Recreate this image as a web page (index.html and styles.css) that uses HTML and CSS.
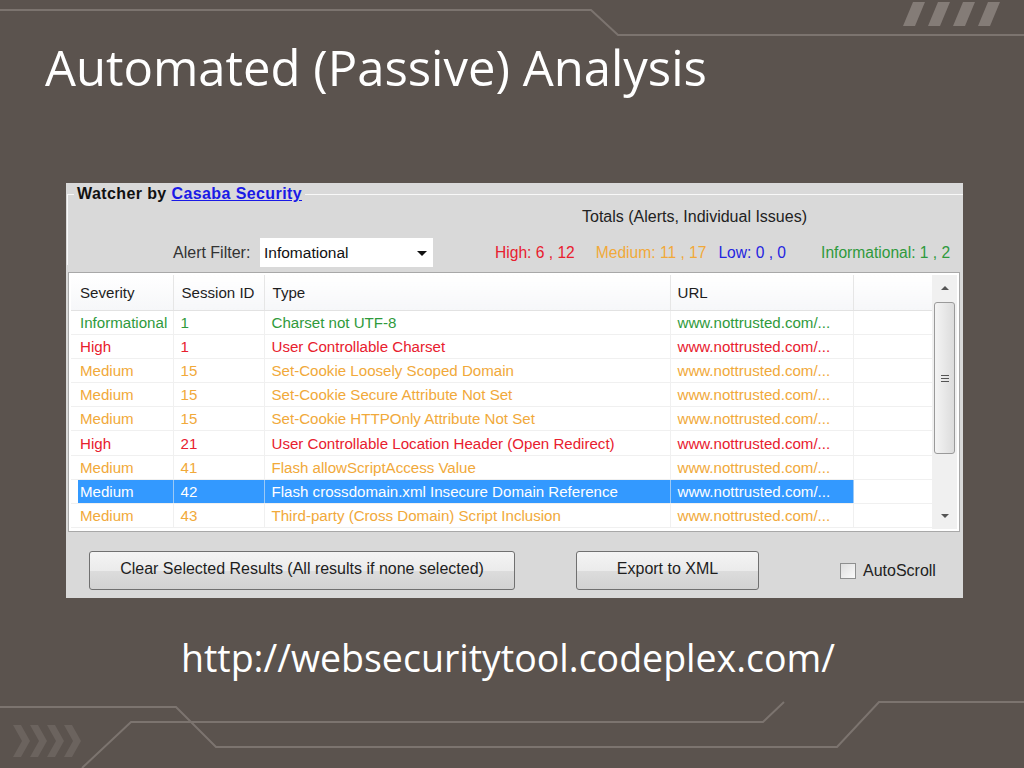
FILE: index.html
```html
<!DOCTYPE html>
<html lang="en">
<head>
	<meta charset="UTF-8">
	<title>Automated (Passive) Analysis</title>
	<link rel="stylesheet" href="styles.css">
</head>
<body>
<div class="slide">
	<!-- slide decoration -->
	<svg class="deco" width="1024" height="768" viewBox="0 0 1024 768">
		<polyline points="0,10 591,10 618,35 1024,35" class="ln"/>
		<polygon points="903,26 913,2 925,2 915,26" class="st"/>
		<polygon points="928,26 938,2 950,2 940,26" class="st"/>
		<polygon points="953,26 963,2 975,2 965,26" class="st"/>
		<polygon points="978,26 988,2 1000,2 990,26" class="st"/>
		<polyline points="0,707 176,707 216,747 837,747 879,702 1024,702" class="ln"/>
		<polyline points="82,768 131,722 763,722 784,702" class="ln"/>
		<polygon points="13,725 21,725 30,741 21,757 13,757 22,741" class="cv"/>
		<polygon points="30,725 38,725 47,741 38,757 30,757 39,741" class="cv"/>
		<polygon points="47,725 55,725 64,741 55,757 47,757 56,741" class="cv"/>
		<polygon points="64,725 72,725 81,741 72,757 64,757 73,741" class="cv"/>
	</svg>

	<h1 class="title">Automated (Passive) Analysis</h1>

	<div class="watcher">
		<fieldset class="grp">
			<legend>Watcher by <a href="#">Casaba Security</a></legend>
			<div class="caption">Totals (Alerts, Individual Issues)</div>
			<div class="filter">
				<span class="lbl">Alert Filter:</span>
				<div class="combo">Infomational<span class="arr"></span></div>
				<span class="tot high">High: 6 , 12</span>
				<span class="tot med">Medium: 11 , 17</span>
				<span class="tot low">Low: 0 , 0</span>
				<span class="tot info">Informational: 1 , 2</span>
			</div>
		</fieldset>

		<div class="list">
			<table class="alerts">
				<tr class="hd"><th class="c1">Severity</th><th class="c2">Session ID</th><th class="c3">Type</th><th class="c4">URL</th><th class="c5"></th></tr>
				<tr class="info"><td>Informational</td><td>1</td><td>Charset not UTF-8</td><td>www.nottrusted.com/...</td><td></td></tr>
				<tr class="high"><td>High</td><td>1</td><td>User Controllable Charset</td><td>www.nottrusted.com/...</td><td></td></tr>
				<tr class="med"><td>Medium</td><td>15</td><td>Set-Cookie Loosely Scoped Domain</td><td>www.nottrusted.com/...</td><td></td></tr>
				<tr class="med"><td>Medium</td><td>15</td><td>Set-Cookie Secure Attribute Not Set</td><td>www.nottrusted.com/...</td><td></td></tr>
				<tr class="med"><td>Medium</td><td>15</td><td>Set-Cookie HTTPOnly Attribute Not Set</td><td>www.nottrusted.com/...</td><td></td></tr>
				<tr class="high"><td>High</td><td>21</td><td>User Controllable Location Header (Open Redirect)</td><td>www.nottrusted.com/...</td><td></td></tr>
				<tr class="med"><td>Medium</td><td>41</td><td>Flash allowScriptAccess Value</td><td>www.nottrusted.com/...</td><td></td></tr>
				<tr class="sel"><td>Medium</td><td>42</td><td>Flash crossdomain.xml Insecure Domain Reference</td><td>www.nottrusted.com/...</td><td class="nosel"></td></tr>
				<tr class="med"><td>Medium</td><td>43</td><td>Third-party (Cross Domain) Script Inclusion</td><td>www.nottrusted.com/...</td><td></td></tr>
			</table>
			<div class="vscroll">
				<div class="sbtn up"></div>
				<div class="thumb"><span></span><span></span><span></span></div>
				<div class="track"></div>
				<div class="sbtn dn"></div>
			</div>
		</div>

		<div class="btns">
			<button class="bt bt-clear">Clear Selected Results (All results if none selected)</button>
			<button class="bt bt-xml">Export to XML</button>
			<label class="chk"><span class="box"></span>AutoScroll</label>
		</div>
	</div>

	<div class="url">http://websecuritytool.codeplex.com/</div>
</div>
</body>
</html>
```

FILE: styles.css
```css
*{box-sizing:border-box;margin:0;padding:0;}
body{background-color:#5b534e;}
.slide{position:relative;width:1024px;height:768px;overflow:hidden;background-color:#5b534e;}
.deco{position:absolute;left:0;top:0;pointer-events:none;}
.deco .ln{fill:none;stroke:#7c746f;stroke-width:2;}
.deco .st{fill:#847c77;}
.deco .cv{fill:#6b635e;}

.title{position:relative;padding:37px 0 0 45px;height:183px;font-family:"Open Sans",sans-serif;font-weight:400;font-size:49px;line-height:60px;color:#fff;}

/* watcher window */
.watcher{position:relative;margin-left:66px;width:897px;height:415px;padding-top:3px;background-color:#d9d9d9;font-family:"Liberation Sans",Arial,sans-serif;font-size:16px;color:#1e1e1e;}
.grp{border:none;border-top:1px solid #f8f8f8;border-left:1px solid #f8f8f8;margin:0 0 0 1px;padding:0;height:79px;}
.grp legend{margin-left:6px;padding:0 3px;font-weight:bold;font-size:16px;color:#111;line-height:16px;letter-spacing:0.4px;}
.grp legend a{color:#1a1ae6;}
.caption{padding:7px 0 0 514px;height:36px;line-height:16px;color:#222;}
.filter{display:flex;align-items:center;height:29px;}
.lbl{margin-left:105px;width:87px;color:#333;}
.combo{position:relative;width:173px;height:29px;background-color:#fff;padding:6px 0 0 4px;color:#111;font-size:15.5px;}
.arr{position:absolute;right:6px;top:13px;border-left:5px solid transparent;border-right:5px solid transparent;border-top:5px solid #111;}
.tot{white-space:nowrap;font-size:15.6px;}
.tot.high{margin-left:62px;color:#e8202e;}
.tot.med{margin-left:21px;color:#f1a93a;}
.tot.low{margin-left:12px;color:#2424e0;}
.tot.info{margin-left:35px;color:#2f9a3c;}

/* list view */
.list{display:flex;margin:7px 0 0 2px;width:892px;height:260px;border:1px solid #a8a8a8;background-color:#fff;padding:2px;font-size:15.1px;}
.alerts{border-collapse:collapse;width:862px;table-layout:fixed;align-self:flex-start;}
.alerts th{height:35px;text-align:left;font-weight:normal;color:#1e1e1e;padding:0 0 0 8px;background:linear-gradient(#fff,#f6f7f9);border-right:1px solid #e6e6e6;border-bottom:1px solid #e2e2e2;}
.alerts .c1{width:102px;padding-left:9px;}
.alerts .c2{width:91px;}
.alerts .c3{width:406px;}
.alerts .c4{width:183px;padding-left:7px;}
.alerts .c5{border-right:none;}
.alerts td{height:24.2px;padding:0 0 0 7px;white-space:nowrap;overflow:hidden;border-right:1px solid #f0f0f0;border-bottom:1px solid #f0f0f0;}
.alerts td:first-child{padding-left:9px;}
.alerts td:nth-child(4){padding-left:7px;}
.alerts td:last-child{border-right:none;}
.alerts tr.info td{color:#2f9a3c;}
.alerts tr.high td{color:#e8202e;}
.alerts tr.med td{color:#f1a93a;}
.alerts tr.sel td{background-color:#3399ff;color:#fff;border-right-color:#9cc9f5;}
.alerts tr.sel td:first-child{box-shadow:inset 7px 0 0 #fff;}
.alerts tr.sel td.nosel{background-color:#fff;}

.vscroll{display:flex;flex-direction:column;width:25px;margin-left:auto;background-color:#f0f0f0;}
.sbtn{position:relative;height:27px;}
.sbtn::after{content:"";position:absolute;left:9px;border-left:4px solid transparent;border-right:4px solid transparent;}
.sbtn.up::after{top:11px;border-bottom:4px solid #555;}
.sbtn.dn::after{top:12px;border-top:4px solid #555;}
.thumb{display:flex;flex-direction:column;justify-content:center;align-items:center;gap:2px;height:152px;margin:0 2px;border:1px solid #9a9a9a;border-radius:3px;background:linear-gradient(90deg,#f4f4f4,#dcdcdc);}
.thumb span{width:8px;height:1px;background-color:#555;}
.track{flex:1;}

/* buttons row */
.btns{display:flex;align-items:center;margin-top:19px;height:39px;}
.bt{height:39px;border:1px solid #707070;border-radius:3px;background:linear-gradient(#f4f4f4 0%,#ebebeb 50%,#dcdcdc 51%,#d2d2d2 100%);font-family:"Liberation Sans",Arial,sans-serif;font-size:16px;color:#1e1e1e;padding-bottom:3px;}
.bt-clear{margin-left:23px;width:426px;}
.bt-xml{margin-left:61px;width:183px;}
.chk{display:flex;align-items:center;margin-left:81px;color:#222;}
.box{width:16px;height:16px;margin-right:7px;border:1px solid #8e8f8f;background:linear-gradient(135deg,#dedede,#fafafa);}

.url{position:relative;margin-top:35px;text-align:center;padding-right:8px;font-family:"Open Sans",sans-serif;font-size:37.5px;line-height:50px;color:#fff;}
```
